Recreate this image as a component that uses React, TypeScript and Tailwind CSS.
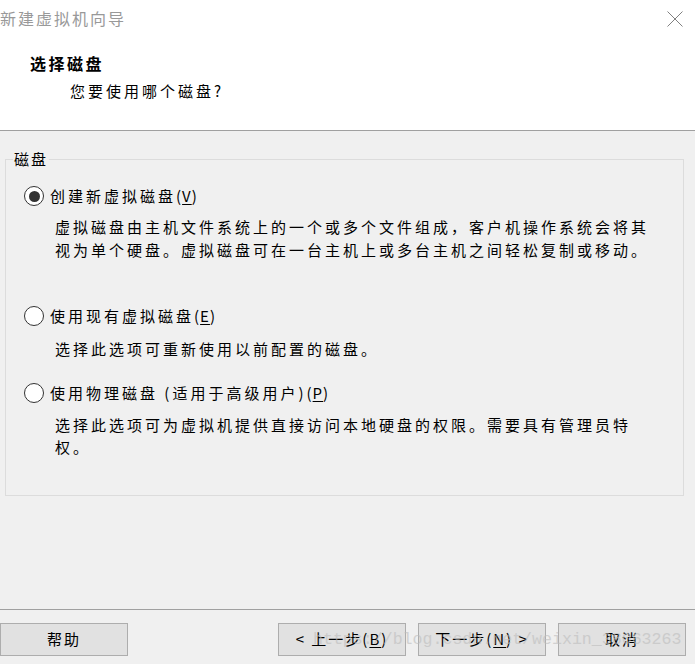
import React from "react";

const font = { fontFamily: '"Noto Sans CJK SC", "Noto Sans", sans-serif' };

function Radio({ checked }: { checked?: boolean }) {
  return (
    <span className="flex h-[20px] w-[20px] shrink-0 items-center justify-center rounded-full border border-[#333333] bg-white">
      {checked && <span className="h-[11px] w-[11px] rounded-full bg-[#333333]" />}
    </span>
  );
}

function Option({
  label,
  hotkey,
  checked,
  lines,
  descTop,
}: {
  label: string;
  hotkey: string;
  checked?: boolean;
  lines: string[];
  descTop: string;
}) {
  return (
    <div>
      <div className="flex h-[22px] items-center pl-[18px]">
        <Radio checked={checked} />
        <span className="ml-[6px] text-[15px] leading-[22px] tracking-[3px] text-black">
          {label}
          <span className="tracking-[1px]">
            (<span className="underline underline-offset-2">{hotkey}</span>)
          </span>
        </span>
      </div>
      <div className={`${descTop} pl-[49px] text-[15px] leading-[22.5px] tracking-[3px] text-black`}>
        {lines.map((l, i) => (
          <div key={i}>{l}</div>
        ))}
      </div>
    </div>
  );
}

function Button({ children }: { children: React.ReactNode }) {
  return (
    <div className="flex h-[33px] w-[128px] items-center justify-center border border-[#adadad] bg-[#e1e1e1] text-[15px] tracking-[2px] text-black">
      {children}
    </div>
  );
}

export default function App() {
  return (
    <div className="relative flex h-[664px] w-[695px] flex-col overflow-hidden bg-[#f0f0f0]" style={font}>
      {/* header */}
      <div className="relative h-[131px] shrink-0 border-b border-[#a0a0a0] bg-white">
        <div className="pt-[6px] text-[16px] leading-[24px] tracking-[2px] text-[#999999]">新建虚拟机向导</div>
        <div className="ml-[30px] mt-[21px] text-[16px] font-bold leading-[24px] tracking-[2.5px] text-black">选择磁盘</div>
        <div className="ml-[70px] mt-[4px] text-[15px] leading-[24px] tracking-[3px] text-black">您要使用哪个磁盘?</div>
        <svg className="absolute left-[667px] top-[11px]" width="16" height="16" viewBox="0 0 16 16">
          <path d="M0.5 0.5 L15.5 15.5 M15.5 0.5 L0.5 15.5" stroke="#808080" strokeWidth="1" fill="none" />
        </svg>
      </div>

      {/* group box */}
      <div className="relative ml-[5px] mt-[28px] h-[337px] w-[679px] shrink-0 border border-[#dcdcdc]">
        <span className="absolute left-[7px] top-[-12px] bg-[#f0f0f0] px-[1px] text-[15px] leading-[22px] tracking-[2px] text-black">
          磁盘
        </span>
        <div className="pt-[25px]">
          <Option
            checked
            label="创建新虚拟磁盘"
            hotkey="V"
            descTop="mt-[9px]"
            lines={[
              "虚拟磁盘由主机文件系统上的一个或多个文件组成，客户机操作系统会将其",
              "视为单个硬盘。虚拟磁盘可在一台主机上或多台主机之间轻松复制或移动。",
            ]}
          />
          <div className="mt-[44px]">
            <Option label="使用现有虚拟磁盘" hotkey="E" descTop="mt-[11px]" lines={["选择此选项可重新使用以前配置的磁盘。"]} />
          </div>
          <div className="mt-[21px]">
            <Option
              label="使用物理磁盘 (适用于高级用户)"
              hotkey="P"
              descTop="mt-[10px]"
              lines={["选择此选项可为虚拟机提供直接访问本地硬盘的权限。需要具有管理员特", "权。"]}
            />
          </div>
        </div>
      </div>

      <div className="flex-1" />

      {/* footer */}
      <div className="flex h-[55px] shrink-0 border-t border-[#a0a0a0] pr-[9px] pt-[13px]">
        <Button>帮助</Button>
        <div className="ml-auto flex gap-[12px]">
          <Button>
            &lt; 上一步(<span className="underline underline-offset-2">B</span>)
          </Button>
          <Button>
            下一步(<span className="underline underline-offset-2">N</span>) &gt;
          </Button>
          <Button>取消</Button>
        </div>
      </div>

      {/* watermark */}
      <div
        className="pointer-events-none absolute left-[313px] top-[626px] text-[16.6px] leading-[28px] text-[#bdbdbd] opacity-60"
        style={{ fontFamily: '"Liberation Mono", monospace' }}
      >
        https://blog.csdn.net/weixin_38063263
      </div>
    </div>
  );
}
